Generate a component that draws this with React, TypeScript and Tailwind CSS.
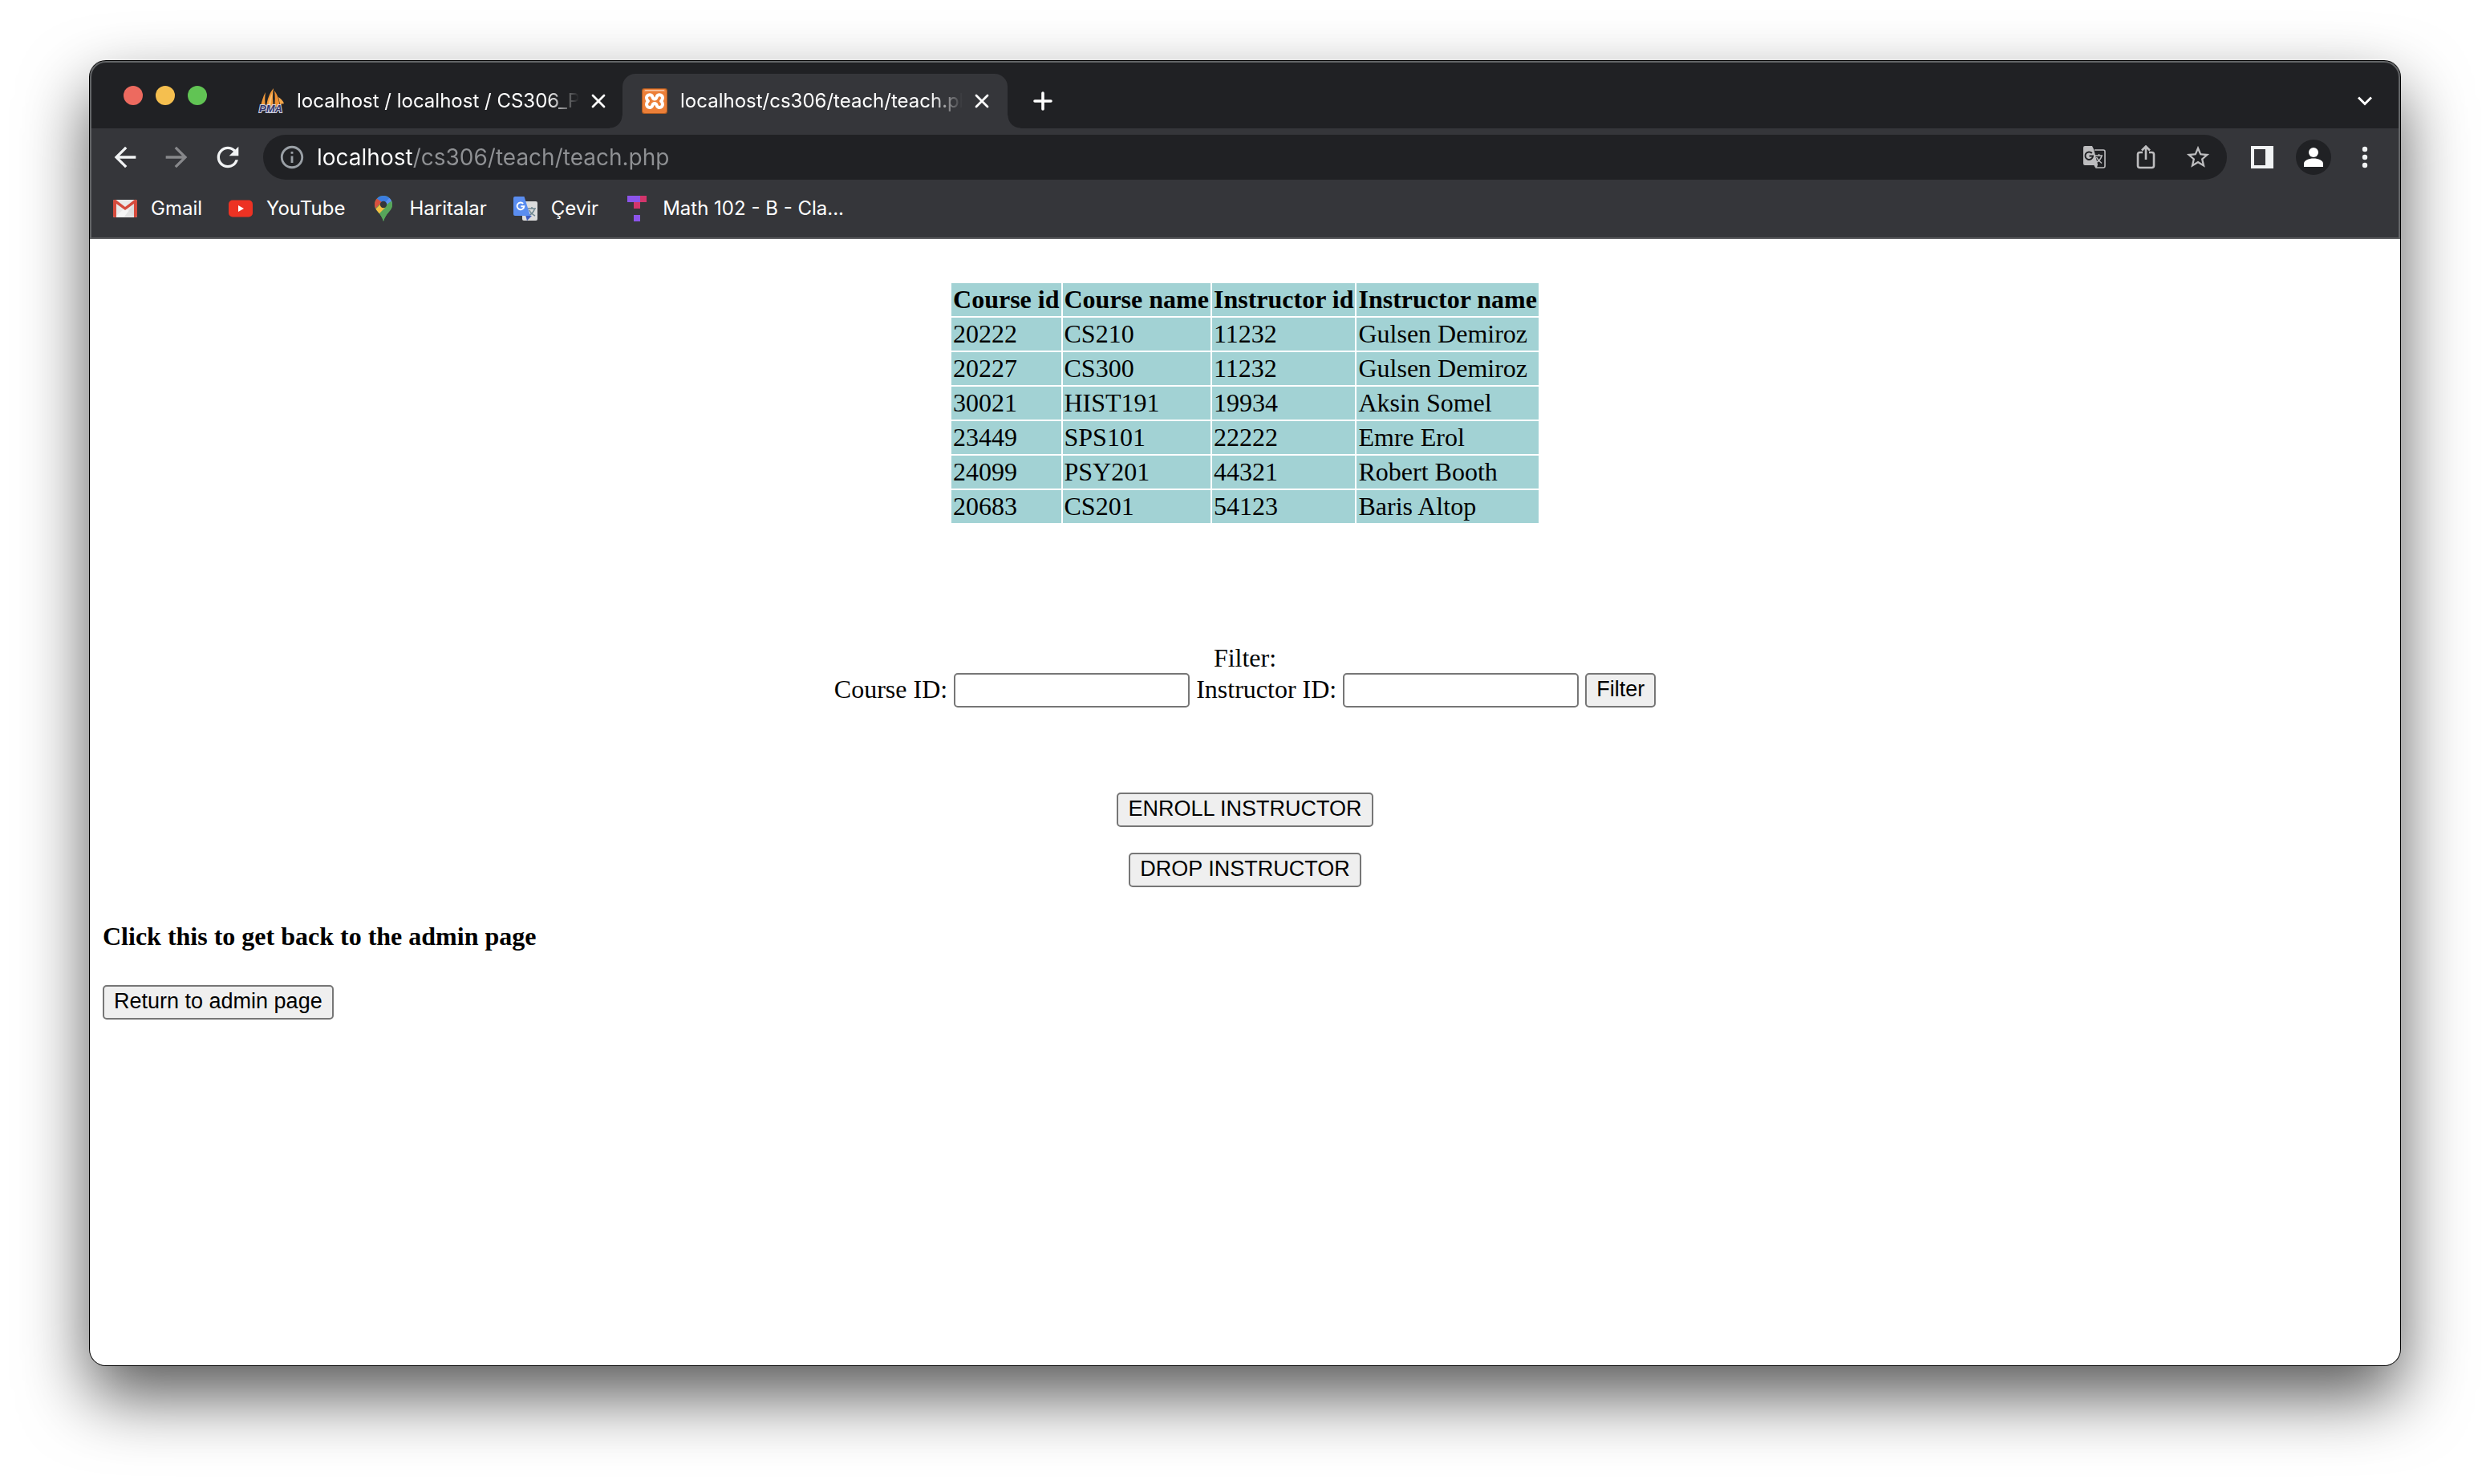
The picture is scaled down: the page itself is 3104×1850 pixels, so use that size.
import React from "react";
import { MdArrowBack, MdArrowForward, MdRefresh, MdOutlineInfo, MdStarBorder } from "react-icons/md";

const courses = [
  ["20222", "CS210", "11232", "Gulsen Demiroz"],
  ["20227", "CS300", "11232", "Gulsen Demiroz"],
  ["30021", "HIST191", "19934", "Aksin Somel"],
  ["23449", "SPS101", "22222", "Emre Erol"],
  ["24099", "PSY201", "44321", "Robert Booth"],
  ["20683", "CS201", "54123", "Baris Altop"],
];

const columns = ["Course id", "Course name", "Instructor id", "Instructor name"];

function PmaIcon() {
  return (
    <svg viewBox="0 0 32 32" className="size-8 shrink-0 overflow-visible" aria-hidden="true">
      <path d="M3 23C4 17 6 10 9 5c-1 6-1 12 0 18z" fill="#f2993a" />
      <path d="M10 23c1-9 4-17 9-23-1.500 8-1 16 0 23z" fill="#f2993a" />
      <path d="M12 23c1-7 3-13 6-18l-3 18z" fill="#fbbd6f" />
      <path d="M20 3c4 5 6 11 6.500 20H20c1-7 1-13 0-20z" fill="#ef8f31" />
      <path d="M25 11c3.500 2 6 5 7 8l-5 1z" fill="#f5a649" />
      <text x="1" y="30" fontSize="13" fontWeight="700" fontStyle="italic" fontFamily="Liberation Sans, sans-serif" fill="#35366b" stroke="#d4d6e2" strokeWidth="2" paintOrder="stroke">
        PMA
      </text>
    </svg>
  );
}

function XamppIcon() {
  return (
    <svg viewBox="0 0 32 32" className="size-8 shrink-0" aria-hidden="true">
      <rect width="32" height="32" rx="3" fill="#a85a22" />
      <rect x="1" y="1" width="30" height="30" rx="3" fill="#ec7f38" />
      <path d="M3 3.500 4.500 2h23L29 3.500z" fill="#f8c8a4" />
      <path
        d="M16 13.500c-1.800 0-2.200-1.200-2.600-2.600C12.900 9 11.600 8.200 9.800 8.200 7.400 8.200 6 9.900 6 12c0 1.700.7 2.900 2 4-1.300 1.100-2 2.300-2 4 0 2.300 1.500 4 3.900 4 1.900 0 3-1 3.500-2.700.4-1.400 1-2.300 2.600-2.300s2.200.9 2.600 2.300C19.100 23 20.200 24 22.100 24c2.400 0 3.900-1.700 3.900-4 0-1.700-.7-2.900-2-4 1.300-1.100 2-2.300 2-4 0-2.100-1.400-3.800-3.800-3.800-1.800 0-3.100.8-3.600 2.700-.4 1.400-.8 2.600-2.600 2.600z"
        fill="none"
        stroke="#fff"
        strokeWidth="4"
        strokeLinejoin="round"
      />
    </svg>
  );
}

function GmailIcon() {
  return (
    <svg viewBox="0 0 32 32" className="size-8 shrink-0" aria-hidden="true">
      <rect x="1" y="5" width="30" height="22" rx="2" fill="#e9e9e9" />
      <path d="m4 26 12-11 12 11z" fill="#f5f5f5" />
      <path d="M28 9v17H15z" fill="#d6d6d6" opacity=".6" />
      <path d="M1 7v18a2 2 0 0 0 2 2h2V10l11 8 11-8v17h2a2 2 0 0 0 2-2V7c0-2-2.500-3-4-1.500L16 14 5 5.500C3.500 4 1 5 1 7z" fill="#d54b3d" />
    </svg>
  );
}

function YouTubeIcon() {
  return (
    <svg viewBox="0 0 32 32" className="size-8 shrink-0" aria-hidden="true">
      <rect x="1" y="5.500" width="30" height="21" rx="5" fill="#ed3223" />
      <path d="m13 12 7 4-7 4z" fill="#fff" />
    </svg>
  );
}

function MapsIcon() {
  return (
    <svg viewBox="0 0 32 32" className="size-8 shrink-0" aria-hidden="true">
      <defs>
        <clipPath id="pin">
          <path d="M16 0C9.900 0 5 4.900 5 11c0 4 1.800 6.500 4.500 9.500C12.500 24 14.500 27 16 32c1.500-5 3.500-8 6.500-11.500C25.200 17.500 27 15 27 11c0-6.100-4.900-11-11-11z" />
        </clipPath>
      </defs>
      <g clipPath="url(#pin)">
        <rect width="32" height="32" fill="#57a55a" />
        <path d="m7 3 9 8L30 0H10z" fill="#3b7de0" />
        <path d="m16 11 8-9 6 4-14 16z" fill="#5b91f2" />
        <path d="M6 23 20 11l8-6v28H12z" fill="#57a55a" />
        <path d="m3 20 10-10 5 5-9 9z" fill="#f4be42" />
        <path d="M2 17 2 5l5-2 7 5-8 8z" fill="#d9503f" />
      </g>
      <circle cx="16" cy="11" r="4.200" fill="#35363a" />
    </svg>
  );
}

function TranslateIcon() {
  return (
    <svg viewBox="0 0 32 32" className="size-8 shrink-0" aria-hidden="true">
      <rect x="12" y="7" width="19" height="24" rx="2" fill="#dcdcdc" />
      <path d="M19 16h10M24 14v2M27.500 16c-1 4-4 7-7 8.500M21 18c1 3 4 5.500 7 7" stroke="#6f8790" strokeWidth="1.500" fill="none" />
      <path d="m16 24 8 1-6 6z" fill="#3c5bc0" />
      <path d="M3 1h11.500L22 25H3a2 2 0 0 1-2-2V3a2 2 0 0 1 2-2z" fill="#5a8df0" />
      <path d="M13.200 9.800A4.400 4.400 0 1 0 14.400 13.200H10.300" stroke="#fff" strokeWidth="1.900" fill="none" />
    </svg>
  );
}

function TIcon() {
  return (
    <svg viewBox="0 0 32 32" className="size-8 shrink-0" aria-hidden="true">
      <path d="M4 0h16v8H4zM12 24h8v8h-8z" fill="#8c54ea" />
      <path d="M20 0h8v8h-8v8h-8V8h8z" fill="#d2356b" />
    </svg>
  );
}

function PageTranslateIcon() {
  return (
    <svg viewBox="0 0 28 28" className="size-7" aria-hidden="true">
      <path d="M14 5h11a2 2 0 0 1 2 2v18a2 2 0 0 1-2 2H16l-2-3" fill="none" stroke="#bdbdbf" strokeWidth="1.600" />
      <path d="M15 12h9M19.500 10v2M23 12c-1 4-3 6.500-6 8M16.500 14c1 2.500 3 5 6.500 7.500" stroke="#bdbdbf" strokeWidth="1.500" fill="none" />
      <path d="M2 0h9l2 4 5 19-1 4-3-3H2a2 2 0 0 1-2-2V2a2 2 0 0 1 2-2z" fill="#bdbdbf" />
      <path d="M10.800 9A4.800 4.800 0 1 0 12 12.500H7.500" stroke="#202124" strokeWidth="2" fill="none" />
    </svg>
  );
}

function ShareIcon() {
  return (
    <svg viewBox="0 0 28 30" className="h-[30px] w-7" fill="none" stroke="#bdbdbf" strokeWidth="2.600" aria-hidden="true">
      <path d="M10 9H6.500A2.500 2.500 0 0 0 4 11.500v14A2.500 2.500 0 0 0 6.500 28h15a2.500 2.500 0 0 0 2.500-2.500v-14A2.500 2.500 0 0 0 21.500 9H18" />
      <path d="M14 18V2M9 6.500l5-5 5 5" />
    </svg>
  );
}

function CloseButton({ label }: { label: string }) {
  return (
    <button type="button" aria-label={label} className="ml-2 flex size-8 shrink-0 items-center justify-center">
      <svg viewBox="0 0 18 18" className="size-[18px]" stroke="#fff" strokeWidth="2.800" strokeLinecap="round" aria-hidden="true">
        <path d="m2 2 14 14M16 2 2 16" />
      </svg>
    </button>
  );
}

function Tab({ title, icon, active }: { title: string; icon: React.ReactNode; active?: boolean }) {
  return (
    <div
      role="tab"
      aria-selected={!!active}
      className={
        "relative flex h-[68px] w-[480px] items-center rounded-t-2xl pr-4 pl-6 " + (active ? "bg-[#35363a]" : "-mr-0.5")
      }
    >
      {active && (
        <>
          <span className="absolute bottom-0 -left-4 size-4 bg-[radial-gradient(circle_at_0_0,transparent_15px,#35363a_16px)]" />
          <span className="absolute -right-4 bottom-0 size-4 bg-[radial-gradient(circle_at_100%_0,transparent_15px,#35363a_16px)]" />
        </>
      )}
      {icon}
      <span className="ml-4 min-w-0 flex-1 overflow-hidden text-[24px] leading-8 whitespace-nowrap text-white [mask-image:linear-gradient(to_right,black_calc(100%-40px),transparent)]">
        {title}
      </span>
      <CloseButton label={"Close " + title} />
    </div>
  );
}

function Bookmark({ label, icon }: { label: string; icon: React.ReactNode }) {
  return (
    <a href="#" className="flex items-center gap-4 text-[24px] leading-8 whitespace-nowrap text-white">
      {icon}
      {label}
    </a>
  );
}

function PageButton({ children }: { children: React.ReactNode }) {
  return (
    <button
      type="button"
      className="h-[43px] rounded-[5px] border-2 border-[#767676] bg-[#efefef] px-3 pb-0.5 font-['Liberation_Sans',Arial,sans-serif] text-[27px] leading-[37px] whitespace-nowrap text-black"
    >
      {children}
    </button>
  );
}

const fieldClass =
  "h-[43px] w-[294px] rounded-[5px] border-2 border-[#767676] bg-white px-1 font-['Liberation_Sans',Arial,sans-serif] text-[27px] outline-none";

export default function App() {
  return (
    <div className="flex min-h-screen flex-col bg-white px-28 pt-19 pb-37">
      <div className="flex flex-1 flex-col overflow-hidden rounded-[20px] bg-white shadow-[0_0_0_1px_#000,0_38px_84px_rgba(0,0,0,0.66)]">
        <header className="relative bg-[#35363a] font-[Inter,sans-serif]">
          <div className="flex h-21 items-end bg-[#202124] pr-7">
            <div className="mr-[40px] ml-[42px] flex gap-4 pb-[29px]">
              <button type="button" aria-label="Close window" className="size-6 rounded-full bg-[#ed6a5f]" />
              <button type="button" aria-label="Minimize window" className="size-6 rounded-full bg-[#f5bf4f]" />
              <button type="button" aria-label="Zoom window" className="size-6 rounded-full bg-[#61c454]" />
            </div>
            <div role="tablist" className="flex">
              <Tab title="localhost / localhost / CS306_P" icon={<PmaIcon />} />
              <Tab title="localhost/cs306/teach/teach.php" icon={<XamppIcon />} active />
            </div>
            <button type="button" aria-label="New tab" className="ml-7 flex h-[68px] w-8 items-center justify-center">
              <svg viewBox="0 0 24 24" className="size-6" stroke="#fff" strokeWidth="3.600" strokeLinecap="round" aria-hidden="true">
                <path d="M12 2v20M2 12h20" />
              </svg>
            </button>
            <button type="button" aria-label="Search tabs" className="ml-auto flex h-[68px] w-8 items-center justify-center">
              <svg viewBox="0 0 18 12" className="h-3 w-[18px]" fill="none" stroke="#fff" strokeWidth="3" aria-hidden="true">
                <path d="m1 1.500 8 8 8-8" />
              </svg>
            </button>
          </div>

          <div className="flex h-18 items-center pr-7 pl-6">
            <button type="button" aria-label="Back">
              <MdArrowBack className="size-10 text-[#f1f3f4]" />
            </button>
            <button type="button" aria-label="Forward" className="ml-6">
              <MdArrowForward className="size-10 text-[#87888b]" />
            </button>
            <button type="button" aria-label="Reload" className="ml-6">
              <MdRefresh className="size-10 text-[#f1f3f4]" />
            </button>
            <div className="ml-6 flex h-14 flex-1 items-center rounded-full bg-[#202124] pr-[19px] pl-[19px]">
              <MdOutlineInfo className="size-[34px] text-[#9aa0a6]" />
              <input
                type="text"
                aria-label="Address"
                defaultValue="localhost/cs306/teach/teach.php"
                className="ml-3.5 min-w-0 flex-1 bg-[linear-gradient(to_right,#fff_120px,#8f9194_120px)] bg-clip-text text-[28px] leading-10 text-[#8f9194] outline-none [-webkit-text-fill-color:transparent]"
              />
              <button type="button" aria-label="Translate this page" className="flex w-8 justify-center">
                <PageTranslateIcon />
              </button>
              <button type="button" aria-label="Share" className="ml-8 flex w-8 justify-center">
                <ShareIcon />
              </button>
              <button type="button" aria-label="Bookmark this page" className="ml-8 flex justify-center">
                <MdStarBorder className="size-[34px] text-[#bdbdbf]" />
              </button>
            </div>
            <button type="button" aria-label="Side panel" className="ml-[30px]">
              <svg viewBox="0 0 28 28" className="size-7" aria-hidden="true">
                <path fillRule="evenodd" d="M0 0h28v28H0zM4 4v20h14V4z" fill="#f1f3f4" />
              </svg>
            </button>
            <button type="button" aria-label="Profile" className="ml-7 flex size-11 items-center justify-center rounded-full bg-[#202124]">
              <svg viewBox="0 0 24 24" className="size-6" fill="#fff" aria-hidden="true">
                <circle cx="12" cy="6" r="6" />
                <path d="M0 24v-4c0-4 6-6.500 12-6.500S24 16 24 20v4z" />
              </svg>
            </button>
            <button type="button" aria-label="Menu" className="ml-[26px] flex w-8 justify-center">
              <svg viewBox="0 0 8 28" className="h-7 w-2" fill="#f1f3f4" aria-hidden="true">
                <circle cx="4" cy="4" r="3.200" />
                <circle cx="4" cy="14" r="3.200" />
                <circle cx="4" cy="24" r="3.200" />
              </svg>
            </button>
          </div>

          <nav aria-label="Bookmarks" className="flex h-[66px] items-center gap-8 border-b-2 border-[#5d5e61] px-7 pb-2">
            <Bookmark label="Gmail" icon={<GmailIcon />} />
            <Bookmark label="YouTube" icon={<YouTubeIcon />} />
            <Bookmark label="Haritalar" icon={<MapsIcon />} />
            <Bookmark label="Çevir" icon={<TranslateIcon />} />
            <Bookmark label="Math 102 - B - Cla..." icon={<TIcon />} />
          </nav>
          <div className="pointer-events-none absolute inset-0 rounded-t-[20px] border-x-2 border-t-2 border-[#626466]" />
        </header>

        <main className="flex-1 p-4 font-['Liberation_Serif',serif] text-[32px] leading-[37px] text-black">
          <div className="flex flex-col items-center pt-[37px]">
            <table className="border-separate border-spacing-0.5">
              <thead>
                <tr>
                  {columns.map((c) => (
                    <th key={c} className="bg-[#a2d2d4] p-0.5 text-left font-bold whitespace-nowrap">
                      {c}
                    </th>
                  ))}
                </tr>
              </thead>
              <tbody>
                {courses.map((row) => (
                  <tr key={row[0]}>
                    {row.map((cell, i) => (
                      <td key={i} className="bg-[#a2d2d4] p-0.5 whitespace-nowrap">
                        {cell}
                      </td>
                    ))}
                  </tr>
                ))}
              </tbody>
            </table>

            <form className="mt-[148px] flex flex-col items-center" onSubmit={(e) => e.preventDefault()}>
              <p>Filter:</p>
              <div className="flex items-start gap-2 leading-10">
                <label htmlFor="course">Course ID:</label>
                <input id="course" type="text" className={fieldClass} />
                <label htmlFor="instructor">Instructor ID:</label>
                <input id="instructor" type="text" className={fieldClass} />
                <PageButton>Filter</PageButton>
              </div>
            </form>

            <div className="mt-[106px] flex flex-col items-center gap-8">
              <PageButton>ENROLL INSTRUCTOR</PageButton>
              <PageButton>DROP INSTRUCTOR</PageButton>
            </div>
          </div>

          <h4 className="mt-[43px] mb-[42px] font-bold">Click this to get back to the admin page</h4>
          <PageButton>Return to admin page</PageButton>
        </main>
      </div>
    </div>
  );
}
